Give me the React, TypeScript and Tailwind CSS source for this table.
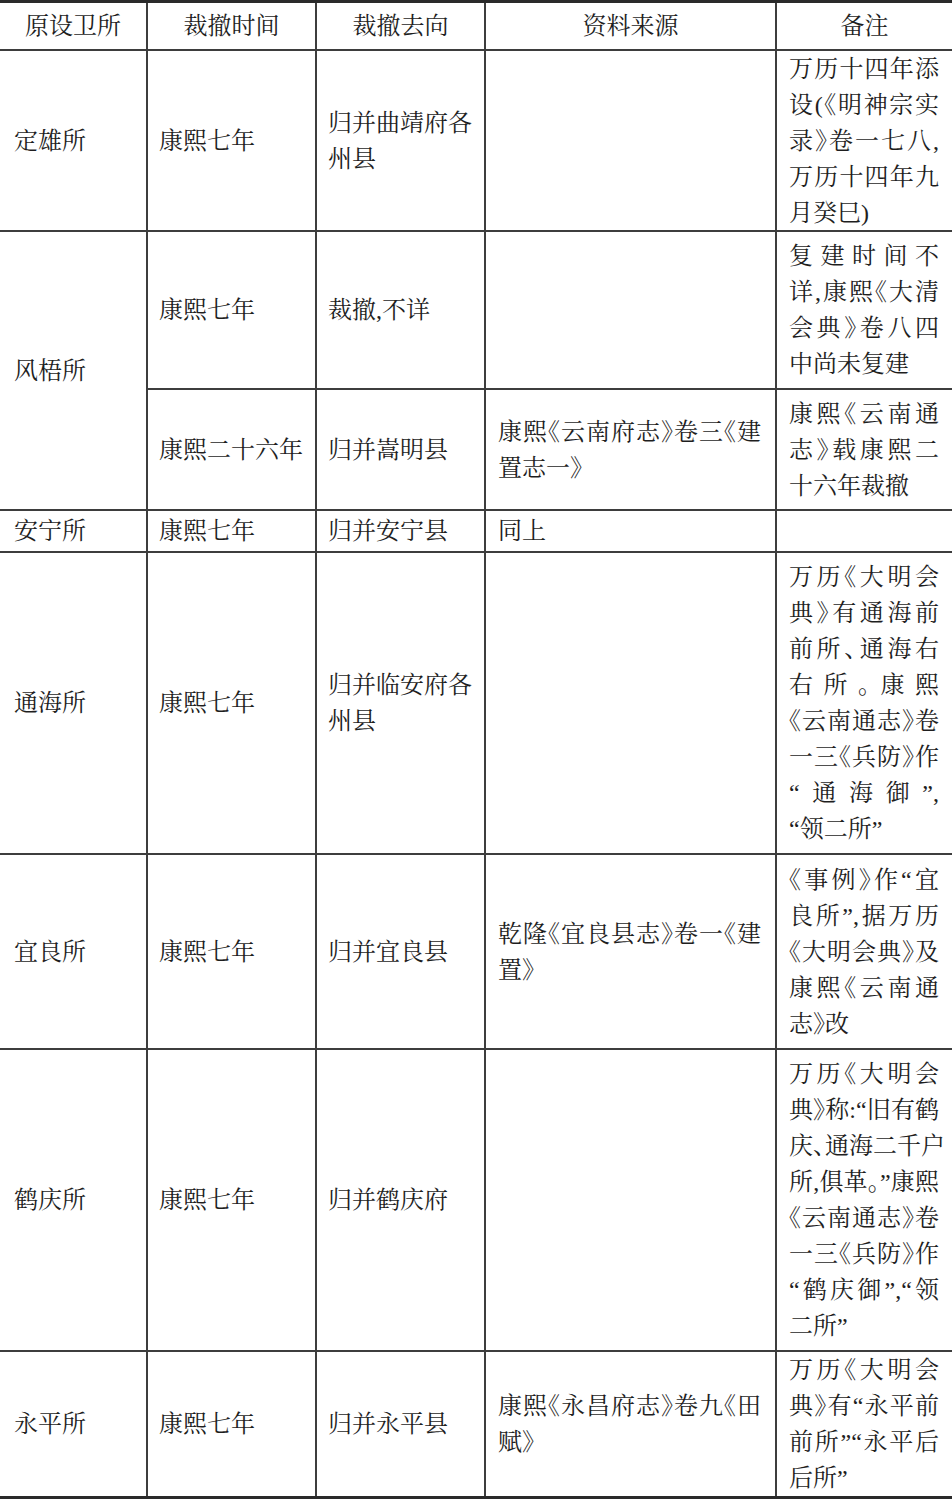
import React from "react";

const FONT =
  '"Liberation Serif", "Noto Serif CJK SC", "Noto Sans CJK SC", serif';

type CellProps = {
  children?: React.ReactNode;
  col?: 1 | 2 | 3 | 4 | 5;
  last?: boolean;
  span?: boolean;
  center?: boolean;
};

function Cell({ children, col = 2, last = false, span = false, center = false }: CellProps) {
  const right = col === 5 ? "" : "border-r-2";
  const bottom = last ? "" : "border-b-2";
  const pad =
    col === 1
      ? "pl-[14px] pr-2"
      : col === 5
      ? "pl-3 pr-[13px]"
      : col === 4
      ? "pl-3 pr-[14px]"
      : "pl-[11px] pr-2";
  return (
    <div
      className={`flex flex-col justify-center border-[#3d3d3d] ${right} ${bottom} ${
        center ? "items-center px-0" : pad
      } ${span ? "row-span-2" : ""} overflow-hidden`}
    >
      {children}
    </div>
  );
}

function Lines({ lines, justify = false }: { lines: string[]; justify?: boolean }) {
  return (
    <div className="w-full">
      {lines.map((l, i) => {
        const isLast = i === lines.length - 1;
        return (
          <div
            key={i}
            className={
              justify && !isLast
                ? "whitespace-nowrap text-justify [text-align-last:justify]"
                : "whitespace-nowrap"
            }
          >
            {l}
          </div>
        );
      })}
    </div>
  );
}

type Row = {
  a?: string;
  aSpan?: boolean;
  b: string[];
  c: string[];
  d: string[];
  e: string[];
  last?: boolean;
};

export default function App() {
  const rows: Row[] = [
    {
      a: "定雄所",
      b: ["康熙七年"],
      c: ["归并曲靖府各", "州县"],
      d: [],
      e: ["万历十四年添", "设(《明神宗实", "录》卷一七八,", "万历十四年九", "月癸巳)"],
    },
    {
      a: "风梧所",
      aSpan: true,
      b: ["康熙七年"],
      c: ["裁撤,不详"],
      d: [],
      e: ["复建时间不", "详,康熙《大清", "会典》卷八四", "中尚未复建"],
    },
    {
      b: ["康熙二十六年"],
      c: ["归并嵩明县"],
      d: ["康熙《云南府志》卷三《建", "置志一》"],
      e: ["康熙《云南通", "志》载康熙二", "十六年裁撤"],
    },
    {
      a: "安宁所",
      b: ["康熙七年"],
      c: ["归并安宁县"],
      d: ["同上"],
      e: [],
    },
    {
      a: "通海所",
      b: ["康熙七年"],
      c: ["归并临安府各", "州县"],
      d: [],
      e: [
        "万历《大明会",
        "典》有通海前",
        "前所、通海右",
        "右所。康熙",
        "《云南通志》卷",
        "一三《兵防》作",
        "“通海御”,",
        "“领二所”",
      ],
    },
    {
      a: "宜良所",
      b: ["康熙七年"],
      c: ["归并宜良县"],
      d: ["乾隆《宜良县志》卷一《建", "置》"],
      e: ["《事例》作“宜", "良所”,据万历", "《大明会典》及", "康熙《云南通", "志》改"],
    },
    {
      a: "鹤庆所",
      b: ["康熙七年"],
      c: ["归并鹤庆府"],
      d: [],
      e: [
        "万历《大明会",
        "典》称:“旧有鹤",
        "庆、通海二千户",
        "所,俱革。”康熙",
        "《云南通志》卷",
        "一三《兵防》作",
        "“鹤庆御”,“领",
        "二所”",
      ],
    },
    {
      a: "永平所",
      b: ["康熙七年"],
      c: ["归并永平县"],
      d: ["康熙《永昌府志》卷九《田", "赋》"],
      e: ["万历《大明会", "典》有“永平前", "前所”“永平后", "后所”"],
      last: true,
    },
  ];

  const headers = ["原设卫所", "裁撤时间", "裁撤去向", "资料来源", "备注"];

  return (
    <div
      className="w-[952px] bg-white text-[24px] leading-[36px] text-[#1e1e1e] [font-feature-settings:'halt']"
      style={{ fontFamily: FONT }}
    >
      <div className="grid grid-cols-[148px_169px_169px_291px_175px] grid-rows-[48px_181px_158px_121px_42px_302px_195px_302px_144px] border-t-[3px] border-b-[3px] border-[#2a2a2a]">
        {headers.map((h, i) => (
          <Cell key={h} col={(i + 1) as 1 | 2 | 3 | 4 | 5} center>
            <div className="whitespace-nowrap">{h}</div>
          </Cell>
        ))}
        {rows.map((r, ri) => (
          <React.Fragment key={ri}>
            {r.a !== undefined && (
              <Cell col={1} span={r.aSpan} last={r.last}>
                <Lines lines={[r.a]} />
              </Cell>
            )}
            <Cell col={2} last={r.last}>
              <Lines lines={r.b} />
            </Cell>
            <Cell col={3} last={r.last}>
              <Lines lines={r.c} />
            </Cell>
            <Cell col={4} last={r.last}>
              <Lines lines={r.d} justify />
            </Cell>
            <Cell col={5} last={r.last}>
              <Lines lines={r.e} justify />
            </Cell>
          </React.Fragment>
        ))}
      </div>
    </div>
  );
}
